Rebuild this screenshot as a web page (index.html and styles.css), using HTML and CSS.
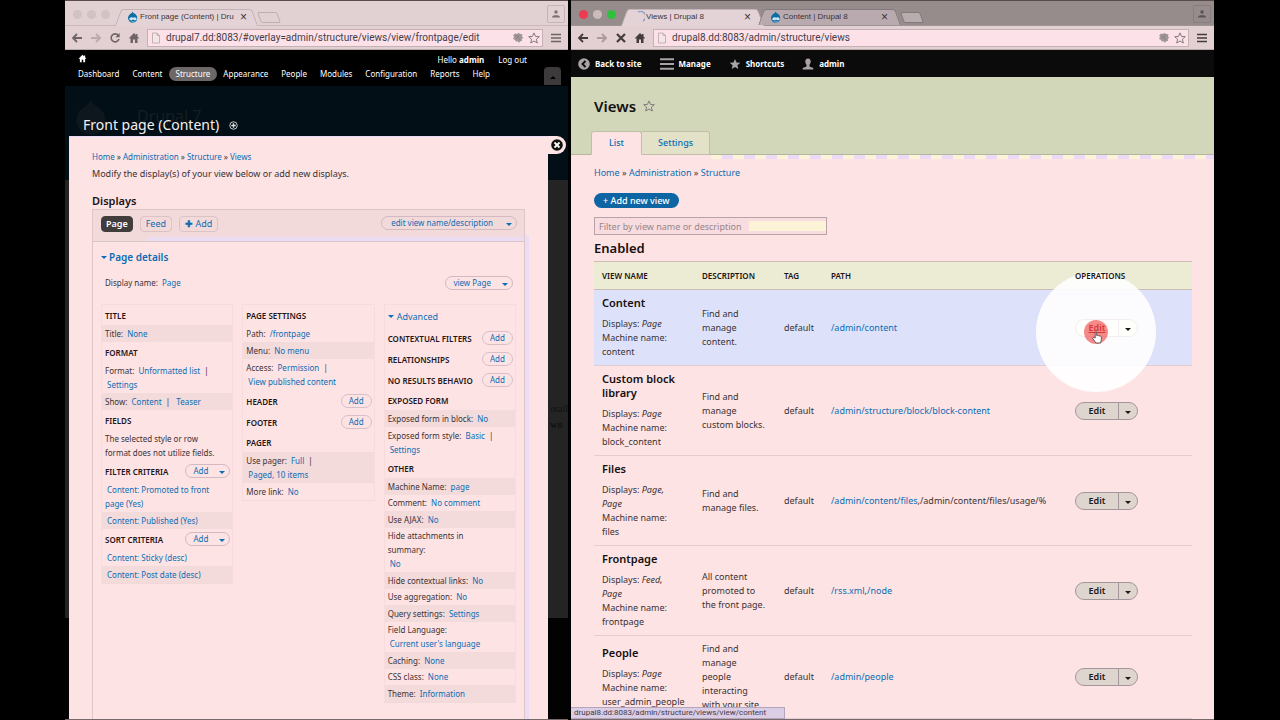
FILE: index.html
```html
<!DOCTYPE html>
<html lang="en">
<head>
<meta charset="utf-8">
<title>Views in Drupal 7 and Drupal 8</title>
<link rel="stylesheet" href="styles.css">
</head>
<body>
<svg class="sprite" aria-hidden="true">
  <symbol id="back" viewBox="0 0 12 12"><path d="M11 6H2M6 2L2 6l4 4" fill="none" stroke="currentColor" stroke-width="1.8"/></symbol>
  <symbol id="fwd" viewBox="0 0 12 12"><path d="M1 6h9M6 2l4 4-4 4" fill="none" stroke="currentColor" stroke-width="1.8"/></symbol>
  <symbol id="reload" viewBox="0 0 12 12"><path d="M9.3 3.4A4 4 0 1 0 10 7" fill="none" stroke="currentColor" stroke-width="1.6"/><path d="M10.6 1v4.2H6.4z" fill="currentColor"/></symbol>
  <symbol id="stop" viewBox="0 0 12 12"><path d="M2 2l8 8M10 2l-8 8" stroke="currentColor" stroke-width="2.2"/></symbol>
  <symbol id="house" viewBox="0 0 12 12"><path d="M6 1L1 6l.8.8L2.5 6v5H5V7.500h2V11h2.500V6l.7.8L11 6 9.500 4.400V2H8v1z" fill="currentColor"/></symbol>
  <symbol id="doc" viewBox="0 0 12 12"><path d="M2.500 1h4.500l2.500 2.500V11h-7zM7 1v2.500h2.500" fill="#f4e6e6" stroke="#b5a5a8" stroke-width=".8"/></symbol>
  <symbol id="star" viewBox="0 0 12 12"><path d="M6 .9l1.500 3.500 3.800.3-2.900 2.500.9 3.800L6 9l-3.300 2 .9-3.800L.7 4.700l3.800-.3z"/></symbol>
  <symbol id="gear" viewBox="0 0 12 12"><path d="M3 1.500l2 .5L6.500.8 8 2l2.500.3L10 4.500l1.300 1.300L9.800 7l.2 2-2 .3L7 11l-1.500-1.800-2 .3L3.200 8 1 7l1-2-.8-1.700z" fill="#a0969a"/><path d="M4 3l4 5M7.500 3L4 7" stroke="#7f767a" stroke-width=".6"/></symbol>
  <symbol id="menu" viewBox="0 0 12 12"><path d="M1 2.500h10M1 6h10M1 9.500h10" stroke="currentColor" stroke-width="1.600"/></symbol>
  <symbol id="person" viewBox="0 0 12 12"><circle cx="6" cy="4" r="1.700" fill="currentColor"/><path d="M2 9.500c0-1.700 1.500-2.200 4-2.200s4 .5 4 2.200z" fill="currentColor"/></symbol>
  <symbol id="user" viewBox="0 0 12 12"><path d="M6 .5c2 0 2.800 1.300 2.700 3.200C8.600 5 8 6.200 7.400 6.900c0 1.700.4 1.900 2 2.400 1.400.4 2 .9 2.100 2.200H.5c.1-1.300.7-1.800 2.100-2.200 1.600-.5 2-.7 2-2.400C4 6.200 3.400 5 3.300 3.700 3.200 1.800 4 .5 6 .5z" fill="currentColor"/></symbol>
  <symbol id="drop" viewBox="0 0 12 12"><path d="M5.500.5C6 2 7.500 2.300 9 3.800a4.800 4.800 0 0 1-.6 7 4.700 4.700 0 0 1-6-.6 4.700 4.700 0 0 1-.4-6C3 2.900 5.200 2.300 5.500.5z" fill="#0b6fa4"/><path d="M6 6.800C4.500 5.800 2.200 6.500 2.400 8.200c.2 1.500 2.500 1.300 3.600.2 1 .9 3.200 1.300 3.600-.2.300-1.600-2-2.600-3.600-1.400z" fill="#cfe6f4"/><path d="M4.500 10.300c1 .8 2.200.8 3 0" stroke="#cfe6f4" stroke-width=".7" fill="none"/></symbol>
</svg>

<main class="stage">
  <section class="window window--idle">
    <div class="strip">
      <span class="lights"><i></i><i></i><i></i></span>
      <span class="tab"><svg class="ico"><use href="#drop"/></svg><span class="tab__name">Front page (Content) | Dru</span><b>×</b></span>
      <span class="newtab"></span>
      <span class="profile"><svg class="ico"><use href="#person"/></svg></span>
    </div>
    <div class="bar">
      <svg class="ico"><use href="#back"/></svg><svg class="ico dim"><use href="#fwd"/></svg><svg class="ico"><use href="#reload"/></svg><svg class="ico"><use href="#house"/></svg>
      <label class="url"><svg class="ico"><use href="#doc"/></svg><input type="text" aria-label="Address" value="drupal7.dd:8083/#overlay=admin/structure/views/view/frontpage/edit"><svg class="ico"><use href="#gear"/></svg><svg class="ico hollow"><use href="#star"/></svg></label>
      <svg class="ico"><use href="#menu"/></svg>
    </div>

    <nav class="d7bar">
      <div class="d7bar__row">
        <a href="#" aria-label="Home"><svg class="ico ico--s"><use href="#house"/></svg></a>
        <span class="d7bar__user"><span>Hello <b>admin</b></span><a href="#">Log out</a></span>
      </div>
      <div class="d7bar__row d7bar__links">
        <a href="#">Dashboard</a><a href="#">Content</a><a href="#" class="on">Structure</a><a href="#">Appearance</a><a href="#">People</a><a href="#">Modules</a><a href="#">Configuration</a><a href="#">Reports</a><a href="#">Help</a>
        <button class="toggle" aria-label="Collapse"><i class="up"></i></button>
      </div>
    </nav>

    <div class="shade">
      <div class="ghost" aria-hidden="true">
        <svg class="ghost__logo" viewBox="0 0 12 12"><path d="M5.500.5C6 2 7.500 2.300 9 3.800a4.800 4.800 0 0 1-.6 7 4.700 4.700 0 0 1-6-.6 4.700 4.700 0 0 1-.4-6C3 2.900 5.200 2.300 5.500.5z"/></svg>
        <span class="ghost__name">Drupal 7</span>
        <span class="ghost__text">otall<br><b>wo</b></span>
      </div>
      <h1 class="overlay-title">Front page (Content)
        <svg class="ico ico--s" viewBox="0 0 12 12"><circle cx="6" cy="6" r="5" fill="none" stroke="#ddd" stroke-width="1.200"/><path d="M6 3v6M3 6h6" stroke="#ddd" stroke-width="1.800"/></svg></h1>
      <div class="overlay">
        <button class="close" aria-label="Close overlay"><svg viewBox="0 0 12 12"><circle cx="6" cy="6" r="5.800" fill="#111"/><path d="M3.500 3.500l5 5M8.500 3.500l-5 5" stroke="#fff" stroke-width="1.800"/></svg></button>
        <p class="crumbs"><a href="#">Home</a> » <a href="#">Administration</a> » <a href="#">Structure</a> » <a href="#">Views</a></p>
        <p class="intro">Modify the display(s) of your view below or add new displays.</p>
        <h2 class="displays">Displays</h2>
        <div class="box">
          <div class="box__top">
            <button class="pick pick--on">Page</button><button class="pick">Feed</button><button class="pick"><b>✚</b> Add</button>
            <span class="split split--wide"><button>edit view name/description</button><button aria-label="More"><i class="down"></i></button></span>
          </div>
          <details class="details" open>
            <summary><i class="down"></i>Page details</summary>
            <div class="display-name"><span>Display name: <a href="#">Page</a></span>
              <span class="split split--view"><button>view Page</button><button aria-label="More"><i class="down"></i></button></span></div>
            <div class="cols">
              <div class="col">
                <div class="head"><h3>Title</h3></div>
                <p class="row alt">Title: <a href="#">None</a></p>
                <div class="head"><h3>Format</h3></div>
                <p class="row">Format: <a href="#">Unformatted list</a> &nbsp;|<br><a href="#" class="in">Settings</a></p>
                <p class="row alt">Show: <a href="#">Content</a> &nbsp;| &nbsp;<a href="#">Teaser</a></p>
                <div class="head"><h3>Fields</h3></div>
                <p class="row">The selected style or row<br>format does not utilize fields.</p>
                <div class="head"><h3>Filter criteria</h3><span class="split"><button>Add</button><button aria-label="More"><i class="down"></i></button></span></div>
                <p class="row item"><a href="#">Content: Promoted to front page (Yes)</a></p>
                <p class="row item alt"><a href="#">Content: Published (Yes)</a></p>
                <div class="head"><h3>Sort criteria</h3><span class="split"><button>Add</button><button aria-label="More"><i class="down"></i></button></span></div>
                <p class="row item"><a href="#">Content: Sticky (desc)</a></p>
                <p class="row item alt"><a href="#">Content: Post date (desc)</a></p>
              </div>
              <div class="col">
                <div class="head"><h3>Page settings</h3></div>
                <p class="row">Path: <a href="#">/frontpage</a></p>
                <p class="row alt">Menu: <a href="#">No menu</a></p>
                <p class="row">Access: <a href="#">Permission</a> &nbsp;|<br><a href="#" class="in">View published content</a></p>
                <div class="head head--empty"><h3>Header</h3><button class="add">Add</button></div>
                <div class="head head--empty"><h3>Footer</h3><button class="add">Add</button></div>
                <div class="head"><h3>Pager</h3></div>
                <p class="row alt">Use pager: <a href="#">Full</a> &nbsp;|<br><a href="#" class="in">Paged, 10 items</a></p>
                <p class="row">More link: <a href="#">No</a></p>
              </div>
              <div class="col">
                <a href="#" class="advanced"><i class="down"></i>Advanced</a>
                <div class="head head--empty"><h3>Contextual filters</h3><button class="add">Add</button></div>
                <div class="head head--empty"><h3>Relationships</h3><button class="add">Add</button></div>
                <div class="head head--empty"><h3>No results behavio</h3><button class="add">Add</button></div>
                <div class="head"><h3>Exposed form</h3></div>
                <p class="row alt">Exposed form in block: <a href="#">No</a></p>
                <p class="row">Exposed form style: <a href="#">Basic</a> &nbsp;|<br><a href="#" class="in">Settings</a></p>
                <div class="head"><h3>Other</h3></div>
                <div class="dense">
                  <p class="row alt">Machine Name: <a href="#">page</a></p>
                  <p class="row">Comment: <a href="#">No comment</a></p>
                  <p class="row alt">Use AJAX: <a href="#">No</a></p>
                  <p class="row">Hide attachments in<br>summary:<br><a href="#" class="in">No</a></p>
                  <p class="row alt">Hide contextual links: <a href="#">No</a></p>
                  <p class="row">Use aggregation: <a href="#">No</a></p>
                  <p class="row alt">Query settings: <a href="#">Settings</a></p>
                  <p class="row">Field Language:<br><a href="#" class="in">Current user's language</a></p>
                  <p class="row alt">Caching: <a href="#">None</a></p>
                  <p class="row">CSS class: <a href="#">None</a></p>
                  <p class="row alt">Theme: <a href="#">Information</a></p>
                </div>
              </div>
            </div>
          </details>
        </div>
      </div>
    </div>
  </section>

  <section class="window window--active">
    <div class="strip">
      <span class="lights"><i></i><i></i><i></i></span>
      <span class="tab tab--front"><svg class="ico" viewBox="0 0 12 12"><path d="M5 1a5 5 0 0 1 5 9" fill="none" stroke="#8a9fc0" stroke-width="1.400"/></svg><span class="tab__name">Views | Drupal 8</span><b>×</b></span>
      <span class="tab tab--rear"><svg class="ico"><use href="#drop"/></svg><span class="tab__name">Content | Drupal 8</span><b>×</b></span>
      <span class="newtab"></span>
      <span class="profile"><svg class="ico"><use href="#person"/></svg></span>
    </div>
    <div class="bar">
      <svg class="ico"><use href="#back"/></svg><svg class="ico dim"><use href="#fwd"/></svg><svg class="ico"><use href="#stop"/></svg><svg class="ico"><use href="#house"/></svg>
      <label class="url"><svg class="ico"><use href="#doc"/></svg><input type="text" aria-label="Address" value="drupal8.dd:8083/admin/structure/views"><svg class="ico"><use href="#gear"/></svg><svg class="ico hollow"><use href="#star"/></svg></label>
      <svg class="ico"><use href="#menu"/></svg>
    </div>

    <nav class="d8bar">
      <a href="#"><svg class="ico" viewBox="0 0 12 12"><circle cx="6" cy="6" r="5.800" fill="currentColor"/><path d="M7.500 3L4.500 6l3 3" fill="none" stroke="#0b0b0b" stroke-width="1.900"/></svg>Back to site</a>
      <a href="#"><svg class="ico ico--m" viewBox="0 0 14 12"><path d="M0 1.200h14M0 6h14M0 10.800h14" stroke="currentColor" stroke-width="2"/></svg>Manage</a>
      <a href="#"><svg class="ico solid"><use href="#star"/></svg>Shortcuts</a>
      <a href="#"><svg class="ico"><use href="#user"/></svg>admin</a>
    </nav>

    <header class="d8head">
      <h1>Views <svg class="ico hollow"><use href="#star"/></svg></h1>
      <nav class="tabs"><a href="#" class="on">List</a><a href="#">Settings</a></nav>
    </header>
    <div class="fringe"></div>

    <div class="d8body">
      <p class="crumbs"><a href="#">Home</a> » <a href="#">Administration</a> » <a href="#">Structure</a></p>
      <button class="primary">+ Add new view</button>
      <input class="filter" type="text" aria-label="Filter by view name or description" placeholder="Filter by view name or description">
      <h2>Enabled</h2>
      <table>
        <thead><tr><th class="c-name">View name</th><th class="c-desc">Description</th><th class="c-tag">Tag</th><th>Path</th><th class="c-ops"><span>Operations</span></th></tr></thead>
        <tbody>
          <tr class="hot">
            <td><h3>Content</h3>Displays: <em>Page</em><br>Machine name: content</td><td>Find and manage content.</td><td>default</td><td><a href="#">/admin/content</a></td>
            <td class="ops"><span class="spot"></span><span class="op op--lit"><button>Edit</button><button aria-label="More"><i class="down"></i></button><span class="click"></span>
              <svg class="hand" viewBox="0 0 12 14"><path d="M3.500 7.500V1.800c0-1.200 1.600-1.200 1.600 0V5c.4-.6 1.500-.5 1.700.2.500-.5 1.500-.3 1.700.4.700-.4 1.700 0 1.700.9v3L9.300 13H4.500L1 8.500C.3 7.400 1.500 6.500 2.300 7.200z" fill="#fff" stroke="#333" stroke-width=".8"/></svg></span></td>
          </tr>
          <tr><td><h3>Custom block library</h3>Displays: <em>Page</em><br>Machine name: block_content</td><td>Find and manage custom blocks.</td><td>default</td><td><a href="#">/admin/structure/block/block-content</a></td>
            <td class="ops"><span class="op"><button>Edit</button><button aria-label="More"><i class="down"></i></button></span></td></tr>
          <tr><td><h3>Files</h3>Displays: <em>Page, Page</em><br>Machine name: files</td><td>Find and manage files.</td><td>default</td><td><a href="#">/admin/content/files</a>,/admin/content/files/usage/%</td>
            <td class="ops"><span class="op"><button>Edit</button><button aria-label="More"><i class="down"></i></button></span></td></tr>
          <tr><td><h3>Frontpage</h3>Displays: <em>Feed, Page</em><br>Machine name: frontpage</td><td>All content promoted to the front page.</td><td>default</td><td><a href="#">/rss.xml</a>,<a href="#">/node</a></td>
            <td class="ops"><span class="op"><button>Edit</button><button aria-label="More"><i class="down"></i></button></span></td></tr>
          <tr><td><h3>People</h3>Displays: <em>Page</em><br>Machine name: user_admin_people</td><td>Find and manage<br>people interacting<br>with your site.</td><td>default</td><td><a href="#">/admin/people</a></td>
            <td class="ops"><span class="op"><button>Edit</button><button aria-label="More"><i class="down"></i></button></span></td></tr>
        </tbody>
      </table>
    </div>
    <div class="status">drupal8.dd:8083/admin/structure/views/view/content</div>
  </section>
</main>
</body>
</html>
```
FILE: styles.css
```css
* { box-sizing: border-box; }
body { margin: 0; background: #000; font: 9px/14px "Noto Sans", "Open Sans", sans-serif; color: #3c3234; }
h1, h2, h3, p { margin: 0; font-weight: normal; }
a { color: #0b6db5; text-decoration: none; }
button, input { font: inherit; color: inherit; margin: 0; padding: 0; border: 0; background: none; border-radius: 0; }
.sprite { position: absolute; width: 0; height: 0; }
.ico { width: 12px; height: 12px; flex: none; }
.ico--s { width: 9px; height: 9px; }
.ico--m { width: 14px; height: 12px; }
.hollow { fill: none; stroke: #857a7d; stroke-width: 1; }
.solid { fill: currentColor; }
.dim { opacity: .35; }
.down, .up { display: inline-block; border: 3px solid transparent; border-bottom-width: 0; border-top-color: currentColor; }
.up { border-top-width: 0; border-bottom: 3px solid currentColor; }

.stage { display: flex; gap: 3px; height: 100vh; padding: 0 66px 0 65px; overflow: hidden; }
.window { position: relative; display: flex; flex-direction: column; min-width: 0; overflow: hidden; border-top: 1px solid #5a4b4e; border-bottom: 1px solid #77696b; }
.window--idle { flex: 503 1 0; }
.window--active { flex: 643 1 0; background: #fde3e3; }

/* Browser frame */
.strip { display: flex; height: 25px; flex: none; align-items: flex-end; padding: 0 3px 0 8px; background: #e2d1d3; border-bottom: 1px solid #c9b9bc; font: 8px/16px "Liberation Sans", Roboto, sans-serif; color: #3a3336; }
.window--active .strip { background: #968c8c; border-bottom-color: #a09496; }
.lights { display: flex; gap: 5px; align-self: center; margin: 2px 8px 0 0; }
.lights i { width: 9px; height: 9px; border-radius: 50%; background: #d2c2c5; }
.window--active .lights i:nth-child(1) { background: #ee3b52; }
.window--active .lights i:nth-child(2) { background: #cbbcb9; }
.window--active .lights i:nth-child(3) { background: #2fc03c; }
.tab { position: relative; z-index: 0; display: flex; align-items: center; gap: 1px; width: 137px; height: 16px; padding: 0 8px 0 9px; white-space: nowrap; }
.tab::before, .tab::after { content: ""; position: absolute; z-index: -1; top: 0; bottom: -1px; width: 56%; background: #e4d3d6; border-top: 1px solid #c4b4b7; }
.tab::before { left: 0; transform: skewX(-20deg); border-left: 1px solid #b8a8ab; border-top-left-radius: 3px; }
.tab::after { right: 0; transform: skewX(20deg); border-right: 1px solid #b8a8ab; border-top-right-radius: 3px; }
.window--active .tab { padding-right: 10px; }
.tab--rear::before, .tab--rear::after { background: #b9aab0; border-color: #83797c; bottom: 0; }
.tab__name { flex: 1; }
.tab b { font-size: 12px; font-weight: 400; }
.newtab { width: 20px; height: 11px; margin: 0 0 2px 4px; border: 1px solid #bfafb2; border-radius: 2px; transform: skewX(20deg); }
.window--active .newtab { background: #b9acae; border-color: #83797c; }
.profile { display: flex; align-items: center; justify-content: center; width: 18px; height: 18px; margin: 0 0 2px auto; border: 1px solid #c4b4b7; border-radius: 2px; color: #7b7073; }
.window--active .profile { border-color: #877d7e; color: #5a5153; }
.bar { display: flex; flex: none; height: 24px; align-items: center; gap: 7px; padding: 0 6px; background: #e2d0d2; border-bottom: 1px solid #b9a9ab; color: #6e6467; }
.window--active .bar { color: #443b3e; }
.url { display: flex; flex: 1; align-items: center; gap: 4px; height: 18px; min-width: 0; padding: 0 2px; background: #fce2e8; border: 1px solid #c3b1b5; }
.url input { flex: 1; min-width: 0; font: 10px/16px Roboto, "Liberation Sans", sans-serif; color: #443c4a; }

/* Drupal 7 */
.d7bar { flex: none; height: 36px; padding: 3px 7px 0 13px; background: #000; color: #fff; font-size: 8px; }
.d7bar a { color: #fff; }
.d7bar__row { display: flex; height: 14px; align-items: center; }
.d7bar__user { display: flex; gap: 14px; margin: 0 34px 0 auto; }
.d7bar__links { gap: 13px; }
.d7bar__links .on { margin: 0 -7px; padding: 0 7px; border-radius: 8px; background: #6d6868; }
.toggle { width: 17px; height: 18px; margin: 0 0 0 auto; align-self: flex-start; border-radius: 4px 4px 0 0; background: #3c3a3a; color: #000; line-height: 8px; }
.shade { position: relative; flex: 1; padding: 30px 20px 0 4px; background: linear-gradient(#020f16 0 94px, #252424 94px 532px, #020202 532px); display: flex; flex-direction: column; }
.ghost { position: absolute; inset: 0; color: #141e24; overflow: hidden; }
.ghost__logo { position: absolute; left: 8px; top: 11px; width: 38px; height: 40px; fill: #0e171d; }
.ghost__name { position: absolute; left: 72px; top: 20px; font-size: 16px; line-height: 20px; }
.ghost__text { position: absolute; right: 0; top: 315px; font: 10px/16px "Liberation Serif", serif; color: #111; }
.overlay-title { position: relative; padding: 0 14px 2px; font-size: 14px; line-height: 18px; color: #f7eff0; }
.overlay-title .ico { margin-left: 6px; }
.overlay { position: relative; flex: 1; padding: 13px 23px 0; background: #fde3e3; border-top: 1px solid #e8dcf6; font-size: 8px; }
.close { position: absolute; left: 100%; top: -1px; width: 18px; height: 18px; padding: 2px 3px; background: #fde3e3; border-radius: 0 9px 9px 0; }
.close svg { display: block; width: 12px; height: 12px; }
.intro { margin-top: 3px; font-size: 9px; }
.displays { margin-top: 13px; font-size: 11px; font-weight: 600; color: #1a1214; }
.box { border: 1px solid #dcc6c8; box-shadow: 4px 26px 0 #ecdcf4; background: #fde3e3; height: 530px; margin-top: 1px; }
.box__top { display: flex; gap: 7px; height: 32px; padding: 6px 7px 0 8px; background: linear-gradient(#ecdcf2, #ecdcf2) 54px 100% / 100% 4px no-repeat #f2dada; border-bottom: 1px solid #d8c6cb; font-size: 9px; }
.pick { height: 16px; padding: 0 5px; border: 1px solid #dbc3c6; border-radius: 4px; color: #0b6db5; line-height: 14px; }
.pick--on { padding: 0 4px; background: #423d3d; border-color: #423d3d; color: #fff; font-weight: 600; }
.split { display: inline-flex; height: 14px; border: 1px solid #d2b9c2; border-radius: 7px; color: #0b6db5; font-size: 8px; line-height: 12px; }
.split button:first-child { padding: 0 7px; }
.split button:last-child { width: 14px; line-height: 8px; }
.split--wide { margin-left: auto; }
.split--wide button:first-child { padding: 0 9px; }
.details { padding: 8px 8px; }
.details summary { display: block; font-size: 10px; font-weight: 600; color: #0b6db5; }
.details summary .down { margin: 0 2px 2px 0; }
.display-name { display: flex; justify-content: space-between; align-items: center; padding: 12px 3px 0 4px; }
.display-name a, .row a { margin-left: 2px; }
.cols { display: grid; grid-template-columns: repeat(3, minmax(0, 1fr)); gap: 9px; align-items: start; margin-top: 14px; }
.col { border: 1px solid #f8dcdd; border-bottom-color: #f2d8d9; }
.head { display: flex; align-items: center; height: 20px; padding: 4px 2px 2px 3px; }
.head--empty { height: 21px; }
.head h3 { flex: 1; min-width: 0; white-space: nowrap; font-size: 8px; font-weight: 600; color: #1f1618; text-transform: uppercase; }
.head .split, .add { flex: none; margin-top: -2px; }
.add { width: 31px; height: 14px; border: 1px solid #d8bfca; border-radius: 7px; color: #0b6db5; line-height: 12px; }
.row { padding: 2px 3px 1px; }
.row.alt { background: #f3dadb; }
.row.item { padding-right: 12px; }
.dense .row:not(.alt) { padding-top: 1px; }
.advanced { display: block; padding: 5px 3px 3px; font-size: 9px; }
.advanced .down { margin: 0 3px 2px 0; }

/* Drupal 8 */
.d8bar { display: flex; flex: none; align-items: center; gap: 18px; height: 27px; padding: 0 7px; background: #0b0b0b; font-size: 8px; font-weight: 700; }
.d8bar a { display: flex; align-items: center; gap: 5px; color: #fff; }
.d8bar .ico { color: #aaa3a3; }
.d8head { flex: none; padding: 20px 20px 0; background: #d2d7b9; border-bottom: 1px solid #b4b69e; }
.d8head h1 { display: flex; align-items: center; gap: 7px; padding-left: 3px; font-size: 15px; line-height: 18px; font-weight: 600; color: #15100f; }
.tabs { display: flex; margin: 16px 0 -1px; font-size: 9px; font-weight: 500; }
.tabs a { height: 24px; padding: 4px 16px; background: #e3e2c8; border: 1px solid #c0c0a8; border-left: 0; border-top-right-radius: 3px; }
.tabs .on { padding: 4px 17px; background: #fde3e3; border-bottom-color: #fde3e3; border-left: 1px solid #c0c0a8; border-radius: 3px 3px 0 0; }
.fringe { flex: none; height: 4px; margin-left: 140px; background: repeating-linear-gradient(90deg, #fdf3d6 0 11px, #ecd9f5 11px 22px); }
.d8body { display: flex; flex-direction: column; align-items: flex-start; flex: none; padding: 7px 22px 0 23px; }
.primary { height: 15px; margin-top: 13px; padding: 0 9px; border-radius: 8px; background: #0d65a4; color: #fff; font-weight: 500; line-height: 14px; }
.filter { width: 39%; height: 18px; margin-top: 9px; padding: 0 4px; background: linear-gradient(#fdf3d6, #fdf3d6) 100% 3px / 77px 10px no-repeat #f9dcdf; border: 1px solid #b7a3a6; }
.filter::placeholder { color: #94868a; opacity: 1; }
.d8body h2 { margin-top: 4px; font-size: 13px; line-height: 18px; font-weight: 600; color: #15100f; }
table { width: 100%; margin-top: 4px; table-layout: fixed; border-collapse: collapse; }
th { height: 28px; padding: 0 8px; background: #ecebd3; border: solid #cdbcb4; border-width: 1px 0; text-align: left; font-size: 8px; font-weight: 600; color: #1b1415; text-transform: uppercase; }
.c-name { width: 100px; } .c-desc { width: 82px; } .c-tag { width: 47px; } .c-ops { width: 125px; }
.c-ops span { position: relative; z-index: 3; }
td { padding: 6px 8px; border-bottom: 1px solid #e3cdd0; vertical-align: middle; }
td:first-child { padding-right: 16px; }
td h3 { margin-bottom: 7px; font-size: 11px; font-weight: 600; color: #15100f; }
.hot td { background: #dde2fa; }
.ops { position: relative; }
.op { position: relative; display: flex; width: 63px; height: 18px; border: 1px solid #a5969c; border-radius: 9px; background: #dfd5cf; color: #1c1718; font-weight: 600; }
.op button { flex: 1; border-right: 1px solid #a5969c; }
.op button + button { flex: 0 0 18px; border: 0; line-height: 8px; }
.op--lit { z-index: 2; background: #fffffb; border-color: #f5eef0; }
.op--lit button:first-child { border-color: #f5eef0; text-decoration: underline; color: #a33; }
.spot { position: absolute; z-index: 1; left: -31px; top: 50%; width: 120px; height: 120px; margin-top: -56px; border-radius: 50%; background: rgba(255, 255, 255, .9); }
.click { position: absolute; left: 8px; top: 0; width: 24px; height: 24px; border-radius: 50%; background: rgba(240, 60, 60, .6); }
.hand { position: absolute; left: 16px; top: 11px; width: 11px; height: 13px; }
.status { position: absolute; left: 0; bottom: 0; padding: 0 18px 0 3px; background: #dacde6; border: 1px solid #b5a5bb; border-left: 0; font: 8px/10px Roboto, "Liberation Sans", sans-serif; color: #443a48; }
```
